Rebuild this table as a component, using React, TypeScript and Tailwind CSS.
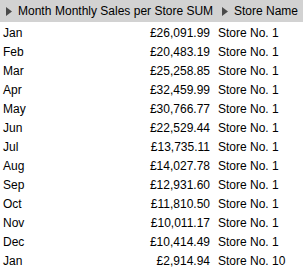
import React from "react";

const rows: [string, string, string][] = [
  ["Jan", "£26,091.99", "Store No. 1"],
  ["Feb", "£20,483.19", "Store No. 1"],
  ["Mar", "£25,258.85", "Store No. 1"],
  ["Apr", "£32,459.99", "Store No. 1"],
  ["May", "£30,766.77", "Store No. 1"],
  ["Jun", "£22,529.44", "Store No. 1"],
  ["Jul", "£13,735.11", "Store No. 1"],
  ["Aug", "£14,027.78", "Store No. 1"],
  ["Sep", "£12,931.60", "Store No. 1"],
  ["Oct", "£11,810.50", "Store No. 1"],
  ["Nov", "£10,011.17", "Store No. 1"],
  ["Dec", "£10,414.49", "Store No. 1"],
  ["Jan", "£2,914.94", "Store No. 10"],
];

function Tri() {
  return (
    <svg width="6" height="9" viewBox="0 0 6 9" className="shrink-0">
      <path d="M0 0 L6 4.5 L0 9 Z" fill="#4a4a4a" />
    </svg>
  );
}

export default function App() {
  return (
    <div
      className="w-[303px] h-[271px] bg-white overflow-hidden text-[12px] leading-[19px] text-black"
      style={{ fontFamily: '"Liberation Sans", Arial, sans-serif' }}
    >
      <div className="h-[22px] bg-[#d2d2d2] flex items-center whitespace-nowrap">
        <div className="w-[55px] flex items-center pl-[6px] gap-[6px]">
          <Tri />
          <span>Month</span>
        </div>
        <div className="w-[164px]">Monthly Sales per Store SUM</div>
        <div className="flex-1 flex items-center pl-[3px] gap-[6px]">
          <Tri />
          <span>Store Name</span>
        </div>
      </div>
      <div className="pt-[2px]">
        {rows.map((r, i) => (
          <div key={i} className="h-[19px] flex items-center whitespace-nowrap">
            <div className="w-[53px] pl-[3px]">{r[0]}</div>
            <div className="w-[157px] text-right">{r[1]}</div>
            <div className="pl-[8px]">{r[2]}</div>
          </div>
        ))}
      </div>
    </div>
  );
}
